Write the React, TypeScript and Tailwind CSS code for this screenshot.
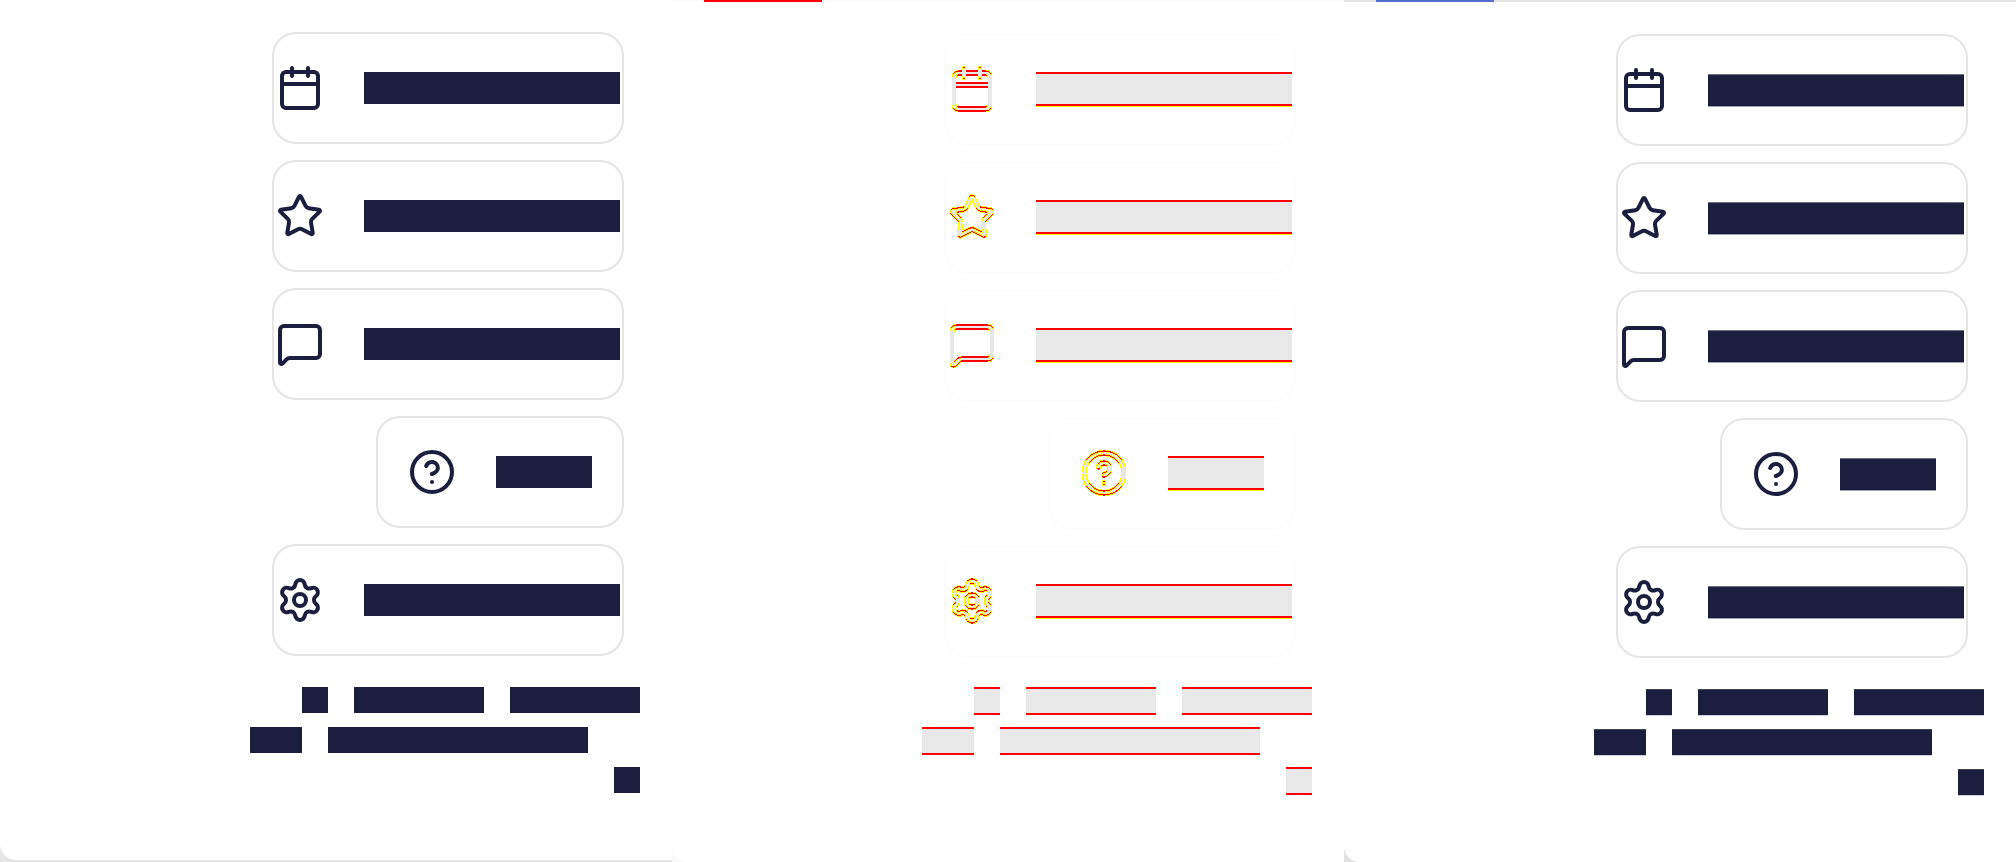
import { Calendar, CircleHelp, MessageSquare, Settings, Star } from 'lucide-react';
import type { LucideIcon } from 'lucide-react';
import clsx from 'clsx';

type Variant = 'expected' | 'diff' | 'actual';

const items: { name: string; icon: LucideIcon; short?: boolean }[] = [
  { name: 'Calendar', icon: Calendar },
  { name: 'Favourites', icon: Star },
  { name: 'Messages', icon: MessageSquare },
  { name: 'Help', icon: CircleHelp, short: true },
  { name: 'Settings', icon: Settings },
];

const barStyle: Record<Variant, string> = {
  expected: 'h-8 bg-[#1b1e3c]',
  diff: 'h-[34px] translate-y-px border-y-2 border-[#ff0000] bg-[#e8e8e8] shadow-[0_1px_0_#ffff00]',
  actual: 'h-8 border-t border-[#6d6f82] bg-[#1b1e3c] shadow-[0_1px_0_#9fa1b3]',
};

const wordStyle: Record<Variant, string> = {
  expected: 'h-[26px] bg-[#1b1e3c]',
  diff: 'h-7 border-y-2 border-[#ff0000] bg-[#e8e8e8]',
  actual: 'h-[26px] border-t border-[#44465c] bg-[#1b1e3c] shadow-[0_1px_0_#d0d1de]',
};

const cardBorder: Record<Variant, string> = {
  expected: 'border-[#e5e5e5]',
  diff: 'translate-y-[2px] border-[#fcfcfc]',
  actual: 'border-[#e5e5e5]',
};

/* Compares a drawing with itself moved down two pixels: pixels that stay
   the same are grey, pixels that change are red, changed soft edges yellow. */
function DiffFilter() {
  return (
    <svg className="absolute size-0" aria-hidden="true">
      <filter id="shift-diff" x="-10%" y="-10%" width="120%" height="120%" colorInterpolationFilters="sRGB">
        <feColorMatrix in="SourceGraphic" type="matrix" values="0 0 0 0 0  0 0 0 0 0  0 0 0 0 0  0 0 0 1 0" result="first" />
        <feOffset in="first" dy="2" result="moved" />
        <feComposite in="first" in2="moved" operator="arithmetic" k2="1" k3="-1" result="lost" />
        <feComposite in="moved" in2="first" operator="arithmetic" k2="1" k3="-1" result="gained" />
        <feComposite in="lost" in2="gained" operator="arithmetic" k2="1" k3="1" result="delta" />
        <feComponentTransfer in="delta" result="changed">
          <feFuncA type="discrete" tableValues="0 1 1 1 1 1 1 1" />
        </feComponentTransfer>
        <feComponentTransfer in="first" result="edgeA">
          <feFuncA type="discrete" tableValues="0 1 1 1 1 1 1 1 1 0" />
        </feComponentTransfer>
        <feComponentTransfer in="moved" result="edgeB">
          <feFuncA type="discrete" tableValues="0 1 1 1 1 1 1 1 1 0" />
        </feComponentTransfer>
        <feMerge result="edges">
          <feMergeNode in="edgeA" />
          <feMergeNode in="edgeB" />
        </feMerge>
        <feComposite in="edges" in2="changed" operator="in" result="changedEdges" />
        <feFlood floodColor="#e8e8e8" />
        <feComposite in2="moved" operator="in" result="grey" />
        <feFlood floodColor="#ff0000" />
        <feComposite in2="changed" operator="in" result="red" />
        <feFlood floodColor="#ffff00" />
        <feComposite in2="changedEdges" operator="in" result="yellow" />
        <feMerge>
          <feMergeNode in="grey" />
          <feMergeNode in="red" />
          <feMergeNode in="yellow" />
        </feMerge>
      </filter>
    </svg>
  );
}

function Word({ variant, width }: { variant: Variant; width: string }) {
  return <span className={clsx('block', width, wordStyle[variant])} />;
}

function Footer({ variant }: { variant: Variant }) {
  return (
    <div className="mt-[31px] flex flex-col gap-[14px] pr-8">
      <div className="flex h-[26px] justify-end gap-[26px]">
        <Word variant={variant} width="w-[26px]" />
        <Word variant={variant} width="w-[130px]" />
        <Word variant={variant} width="w-[130px]" />
      </div>
      <div className="flex h-[26px] justify-end gap-[26px] pr-[52px]">
        <Word variant={variant} width="w-[52px]" />
        <Word variant={variant} width="w-[260px]" />
      </div>
      <div className="flex h-[26px] justify-end">
        <Word variant={variant} width="w-[26px]" />
      </div>
    </div>
  );
}

function Panel({ variant }: { variant: Variant }) {
  return (
    <section
      aria-label={variant}
      className={clsx(
        'relative',
        variant === 'expected' && 'border-b-2 border-[#e5e5e5] bg-[#e5e5e5]',
        variant === 'diff' && 'bg-[#fafafa]',
        variant === 'actual' && 'border-t-2 border-[#e5e5e5] bg-[#e2e2e2]',
      )}
    >
      {variant === 'diff' && (
        <>
          <span className="absolute inset-x-0 top-0 h-[2px] bg-[#fcfcfc]" />
          <span className="absolute top-0 left-8 h-[2px] w-[118px] bg-[#ff0000]" />
        </>
      )}
      {variant === 'actual' && <span className="absolute -top-[2px] left-8 h-[2px] w-[118px] bg-[#526cd0]" />}
      <div className="h-full rounded-bl-2xl bg-white pt-8 pb-[67px]">
        <ul className="flex flex-col items-end gap-4 pr-12">
          {items.map(({ name, icon: Icon, short }) => (
            <li key={name}>
              <button
                type="button"
                aria-label={name}
                className={clsx(
                  'relative flex h-28 items-center rounded-3xl border-2',
                  short ? 'px-[30px]' : 'px-[2px]',
                  variant === 'diff' ? 'border-transparent' : cardBorder[variant],
                )}
              >
                {variant === 'diff' && (
                  <span className={clsx('absolute -inset-[2px] rounded-3xl border-2', cardBorder.diff)} />
                )}
                <span className="flex items-center gap-10">
                  <Icon
                    size={48}
                    strokeWidth={2}
                    className={clsx('shrink-0 text-[#1b1e3c]', variant === 'diff' && '[filter:url(#shift-diff)]')}
                  />
                  <span className={clsx('block', short ? 'w-24' : 'w-64', barStyle[variant])} />
                </span>
              </button>
            </li>
          ))}
        </ul>
        <Footer variant={variant} />
      </div>
    </section>
  );
}

export default function App() {
  return (
    <main className="grid grid-cols-3 bg-white">
      <DiffFilter />
      <Panel variant="expected" />
      <Panel variant="diff" />
      <Panel variant="actual" />
    </main>
  );
}
